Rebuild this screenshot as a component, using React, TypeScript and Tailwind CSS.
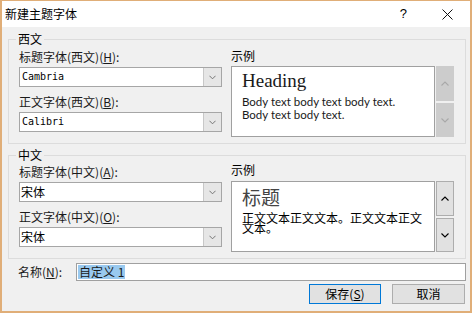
import React from 'react';

const cjk = "font-['Noto_Sans_CJK_SC',sans-serif]";

const Chevron: React.FC<{ up?: boolean; color: string; w?: number }> = ({ up, color, w = 8 }) => (
  <svg width={w} height={5} viewBox="0 0 8 5">
    <polyline
      points={up ? '0.5,4.5 4,1 7.5,4.5' : '0.5,0.5 4,4 7.5,0.5'}
      fill="none"
      stroke={color}
      strokeWidth="1.1"
    />
  </svg>
);

const Combo: React.FC<{ value: string; mono?: boolean }> = ({ value, mono }) => (
  <div className="flex h-[20px] w-[203px] border border-[#a6a6a6] bg-white">
    <div
      className={
        mono
          ? "flex-1 pl-[2px] text-[10px] leading-[18px] text-black font-['DejaVu_Sans_Mono',monospace]"
          : `flex-1 pl-[1px] text-[12px] leading-[18px] text-black ${cjk}`
      }
    >
      {value}
    </div>
    <div className="flex w-[18px] items-center justify-center border-l border-[#c8c8c8] bg-[#e6e6e6]">
      <Chevron color="#707070" w={7} />
    </div>
  </div>
);

const Label: React.FC<{ text: string; mn: string }> = ({ text, mn }) => (
  <div className={`h-[16px] text-[12px] leading-[16px] text-[#1a1a1a] ${cjk}`}>
    {text}(<span className="underline">{mn}</span>):
  </div>
);

const ScrollBtns: React.FC<{ enabled?: boolean }> = ({ enabled }) => (
  <div className="ml-[1px] flex w-[18px] flex-col gap-[2px]">
    <div
      className={
        enabled
          ? 'flex h-[35px] items-center justify-center border border-[#adadad] bg-[#e1e1e1]'
          : 'flex h-[35px] items-center justify-center bg-[#cccccc]'
      }
    >
      <Chevron up color={enabled ? '#000000' : '#a8a8a8'} />
    </div>
    <div
      className={
        enabled
          ? 'flex h-[34px] items-center justify-center border border-[#adadad] bg-[#e1e1e1]'
          : 'flex h-[34px] items-center justify-center bg-[#cccccc]'
      }
    >
      <Chevron color={enabled ? '#000000' : '#a8a8a8'} />
    </div>
  </div>
);

export default function App() {
  return (
    <div className="flex h-[313px] w-[472px] flex-col overflow-hidden border-x-2 border-t border-b-2 border-[#e0ae78] bg-[#f0f0f0]">
      {/* title bar */}
      <div className="flex h-[26px] shrink-0 items-center bg-white pl-[3px]">
        <span className={`text-[12px] text-black ${cjk}`}>新建主题字体</span>
        <span className="ml-auto mr-[35px] text-[13px] font-['Liberation_Sans',sans-serif] text-black">?</span>
        <svg width="11" height="11" viewBox="0 0 11 11" className="mr-[17px]">
          <path d="M0.5 0.5 L10.5 10.5 M10.5 0.5 L0.5 10.5" stroke="#111" strokeWidth="1" />
        </svg>
      </div>

      {/* 西文 */}
      <fieldset className="ml-[6px] mt-[5px] w-[458px] border border-[#dcdcdc]">
        <legend className={`ml-[7px] px-[2px] text-[12px] leading-[14px] text-black ${cjk}`}>西文</legend>
        <div className="flex h-[97px] pl-[10px] pt-[3px]">
          <div className="flex w-[203px] flex-col">
            <Label text="标题字体(西文)" mn="H" />
            <div className="mt-[2px]">
              <Combo value="Cambria" mono />
            </div>
            <div className="mt-[7px]">
              <Label text="正文字体(西文)" mn="B" />
            </div>
            <div className="mt-[2px]">
              <Combo value="Calibri" mono />
            </div>
          </div>
          <div className="ml-[9px] flex flex-col">
            <div className={`h-[16px] text-[12px] leading-[14px] text-black ${cjk}`}>示例</div>
            <div className="mt-[1px] flex">
              <div className="h-[71px] w-[204px] border border-[#a0a0a0] bg-white pl-[10px] pt-[3px]">
                <div className="text-[19px] leading-[22px] text-[#1a1a1a] font-['Liberation_Serif',serif]">Heading</div>
                <div className="mt-[3px] text-[11.5px] leading-[13px] text-[#1a1a1a] font-['Lato',sans-serif]">
                  Body text body text body text.
                </div>
                <div className="text-[11.5px] leading-[13px] text-[#1a1a1a] font-['Lato',sans-serif]">
                  Body text body text.
                </div>
              </div>
              <ScrollBtns />
            </div>
          </div>
        </div>
      </fieldset>

      {/* 中文 */}
      <fieldset className="ml-[6px] mt-[4px] w-[458px] border border-[#dcdcdc]">
        <legend className={`ml-[7px] px-[2px] text-[12px] leading-[14px] text-black ${cjk}`}>中文</legend>
        <div className="flex h-[96px] pl-[10px]">
          <div className="flex w-[203px] flex-col pt-[2px]">
            <Label text="标题字体(中文)" mn="A" />
            <div className="mt-[2px]">
              <Combo value="宋体" />
            </div>
            <div className="mt-[7px]">
              <Label text="正文字体(中文)" mn="O" />
            </div>
            <div className="mt-[2px]">
              <Combo value="宋体" />
            </div>
          </div>
          <div className="ml-[9px] flex flex-col">
            <div className={`h-[16px] text-[12px] leading-[16px] text-black ${cjk}`}>示例</div>
            <div className="mt-[3px] flex">
              <div className={`h-[71px] w-[204px] border border-[#a0a0a0] bg-white pl-[10px] pt-[3px] ${cjk}`}>
                <div className="text-[19px] leading-[24px] text-[#444444]">标题</div>
                <div className="mt-[4px] text-[12px] leading-[10px] text-black">正文文本正文文本。正文文本正文</div>
                <div className="text-[12px] leading-[10px] text-black">文本。</div>
              </div>
              <ScrollBtns enabled />
            </div>
          </div>
        </div>
      </fieldset>

      {/* name */}
      <div className="mt-[4px] flex items-center pl-[16px]">
        <div className={`w-[58px] text-[12px] leading-[18px] text-[#1a1a1a] ${cjk}`}>
          名称(<span className="underline">N</span>):
        </div>
        <div className="flex h-[18px] w-[390px] items-center border border-[#a0a0a0] bg-white pl-[1px]">
          <span className={`bg-[#99c9ef] px-[1px] text-[12px] leading-[14px] text-[#1a1a1a] ${cjk}`}>自定义 1</span>
        </div>
      </div>

      {/* buttons */}
      <div className="mt-[3px] flex justify-end gap-[11px] pr-[5px]">
        <button className={`h-[20px] w-[72px] border border-[#0078d7] bg-[#e1e1e1] text-[12px] leading-[16px] text-black ${cjk}`}>
          保存(<span className="underline">S</span>)
        </button>
        <button className={`h-[20px] w-[73px] border border-[#adadad] bg-[#e1e1e1] text-[12px] leading-[16px] text-black ${cjk}`}>
          取消
        </button>
      </div>
    </div>
  );
}
